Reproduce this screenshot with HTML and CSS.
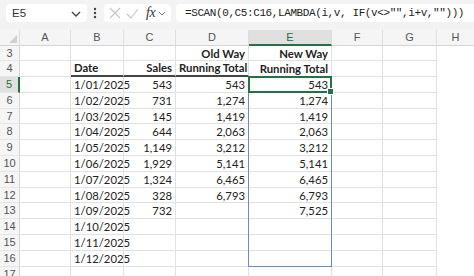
FILE: index.html
```html
<!DOCTYPE html>
<html lang="en">
<head>
  <meta charset="UTF-8">
  <title>SCAN running total</title>
  <link rel="stylesheet" href="styles.css">
</head>
<body>
  <!-- Formula bar: name box, buttons and formula text -->
  <div class="formula-bar">
    <div class="name-box">
      <span>E5</span>
      <svg class="chev" width="10" height="6" viewBox="0 0 10 6"><path d="M1 1l4 4 4-4" fill="none" stroke="#444" stroke-width="1.3"/></svg>
    </div>
    <svg class="dots" width="4" height="12" viewBox="0 0 4 12"><circle cx="2" cy="2" r="1.2"/><circle cx="2" cy="6" r="1.2"/><circle cx="2" cy="10" r="1.2"/></svg>
    <div class="fx-box">
      <svg width="12" height="12" viewBox="0 0 12 12"><path d="M1 1l10 10M11 1L1 11" stroke="#c4c4c4" stroke-width="1.1"/></svg>
      <svg width="13" height="11" viewBox="0 0 13 11"><path d="M1 6l4 4 7-9" fill="none" stroke="#c4c4c4" stroke-width="1.1"/></svg>
      <span class="fx">fx</span>
      <svg class="chev-sm" width="8" height="5" viewBox="0 0 8 5"><path d="M1 1l3 3 3-3" fill="none" stroke="#777" stroke-width="1"/></svg>
    </div>
    <div class="formula-input">=SCAN(0,C5:C16,LAMBDA(i,v, IF(v&lt;&gt;"",i+v,"")))</div>
  </div>

  <!-- Worksheet grid -->
  <div class="sheet">
    <!-- column headers -->
    <div class="corner"><span class="tri"></span></div>
    <div class="ch">A</div><div class="ch">B</div><div class="ch">C</div><div class="ch">D</div>
    <div class="ch active">E</div><div class="ch">F</div><div class="ch">G</div><div class="ch last">H</div>

    <!-- row 3 -->
    <div class="rh">3</div>
    <div class="c"></div><div class="c"></div><div class="c"></div>
    <div class="c n b">Old Way</div><div class="c n b">New Way</div>
    <div class="c"></div><div class="c"></div><div class="h"></div>

    <!-- row 4 -->
    <div class="rh">4</div>
    <div class="c"></div><div class="c b tb">Date</div><div class="c n b tb">Sales</div>
    <div class="c n b tb">Running Total</div><div class="c n b">Running Total</div>
    <div class="c"></div><div class="c"></div><div class="h"></div>

    <!-- row 5 -->
    <div class="rh active">5</div>
    <div class="c"></div><div class="c">1/01/2025</div><div class="c n">543</div>
    <div class="c n">543</div><div class="c n">543</div>
    <div class="c"></div><div class="c"></div><div class="h"></div>

    <!-- row 6 -->
    <div class="rh">6</div>
    <div class="c"></div><div class="c">1/02/2025</div><div class="c n">731</div>
    <div class="c n">1,274</div><div class="c n">1,274</div>
    <div class="c"></div><div class="c"></div><div class="h"></div>

    <!-- row 7 -->
    <div class="rh">7</div>
    <div class="c"></div><div class="c">1/03/2025</div><div class="c n">145</div>
    <div class="c n">1,419</div><div class="c n">1,419</div>
    <div class="c"></div><div class="c"></div><div class="h"></div>

    <!-- row 8 -->
    <div class="rh">8</div>
    <div class="c"></div><div class="c">1/04/2025</div><div class="c n">644</div>
    <div class="c n">2,063</div><div class="c n">2,063</div>
    <div class="c"></div><div class="c"></div><div class="h"></div>

    <!-- row 9 -->
    <div class="rh">9</div>
    <div class="c"></div><div class="c">1/05/2025</div><div class="c n">1,149</div>
    <div class="c n">3,212</div><div class="c n">3,212</div>
    <div class="c"></div><div class="c"></div><div class="h"></div>

    <!-- row 10 -->
    <div class="rh">10</div>
    <div class="c"></div><div class="c">1/06/2025</div><div class="c n">1,929</div>
    <div class="c n">5,141</div><div class="c n">5,141</div>
    <div class="c"></div><div class="c"></div><div class="h"></div>

    <!-- row 11 -->
    <div class="rh">11</div>
    <div class="c"></div><div class="c">1/07/2025</div><div class="c n">1,324</div>
    <div class="c n">6,465</div><div class="c n">6,465</div>
    <div class="c"></div><div class="c"></div><div class="h"></div>

    <!-- row 12 -->
    <div class="rh">12</div>
    <div class="c"></div><div class="c">1/08/2025</div><div class="c n">328</div>
    <div class="c n">6,793</div><div class="c n">6,793</div>
    <div class="c"></div><div class="c"></div><div class="h"></div>

    <!-- row 13 -->
    <div class="rh">13</div>
    <div class="c"></div><div class="c">1/09/2025</div><div class="c n">732</div>
    <div class="c"></div><div class="c n">7,525</div>
    <div class="c"></div><div class="c"></div><div class="h"></div>

    <!-- row 14 -->
    <div class="rh">14</div>
    <div class="c"></div><div class="c">1/10/2025</div><div class="c"></div>
    <div class="c"></div><div class="c"></div>
    <div class="c"></div><div class="c"></div><div class="h"></div>

    <!-- row 15 -->
    <div class="rh">15</div>
    <div class="c"></div><div class="c">1/11/2025</div><div class="c"></div>
    <div class="c"></div><div class="c"></div>
    <div class="c"></div><div class="c"></div><div class="h"></div>

    <!-- row 16 -->
    <div class="rh">16</div>
    <div class="c"></div><div class="c">1/12/2025</div><div class="c"></div>
    <div class="c"></div><div class="c"></div>
    <div class="c"></div><div class="c"></div><div class="h"></div>

    <!-- row 17 (cut off) -->
    <div class="rh">17</div>
    <div class="c"></div><div class="c"></div><div class="c"></div>
    <div class="c"></div><div class="c"></div>
    <div class="c"></div><div class="c"></div><div class="h"></div>

    <!-- spill range and active cell, drawn over the grid -->
    <div class="spill"></div>
    <div class="active-cell"><span class="handle"></span></div>
  </div>
</body>
</html>
```

FILE: styles.css
```css
/* Page basics */
body {
  margin: 0;
  font-family: 'Lato', 'Liberation Sans', sans-serif;
  background-color: #ffffff;
  color: #222;
  overflow: hidden;
}

/* Formula bar strip */
.formula-bar {
  height: 30px;
  background-color: #f3f3f3;
  display: flex;
  align-items: flex-start;
  padding: 4px 0 0 6px;
  box-sizing: border-box;
}

.name-box {
  width: 81px;
  height: 18px;
  background: #fff;
  border-radius: 4px;
  display: flex;
  align-items: center;
  justify-content: space-between;
  padding: 0 6px 0 6px;
  box-sizing: border-box;
  font-family: 'Liberation Sans', sans-serif;
  font-size: 11.5px;
  color: #333;
}

.name-box .chev {
  margin-top: 1px;
}

.dots {
  fill: #444;
  margin: 3px 7px 0 6px;
}

.fx-box {
  width: 67px;
  height: 18px;
  background: #fff;
  border-radius: 4px;
  display: flex;
  align-items: center;
  gap: 5px;
  padding-left: 5px;
  box-sizing: border-box;
}

.fx-box .fx {
  font-family: 'Liberation Serif', serif;
  font-style: italic;
  font-size: 14px;
  color: #333;
  margin-left: 2px;
  letter-spacing: -0.5px;
}

.fx-box .chev-sm {
  margin-left: -2px;
}

.formula-input {
  flex: 1;
  height: 18px;
  margin-left: 5px;
  background: #fff;
  border-radius: 4px 0 0 4px;
  padding-left: 9px;
  font-family: 'Liberation Mono', monospace;
  font-size: 11px;
  letter-spacing: -0.4px;
  line-height: 18px;
  color: #222;
  white-space: nowrap;
}

/* Worksheet grid */
.sheet {
  position: relative;
  display: grid;
  grid-template-columns: 20px 51px 53px 52px 73px 83px 51px 54px 1fr;
  grid-template-rows: 15.5px repeat(15, 15.8px);
  font-size: 11.3px;
}

.sheet > div {
  box-sizing: border-box;
  white-space: nowrap;
}

/* column header cells */
.corner,
.ch {
  background: #f5f5f5;
  border-right: 1px solid #dedede;
  border-bottom: 1px solid #d4d4d4;
  text-align: center;
  line-height: 15px;
  color: #555;
  font-family: 'Liberation Sans', sans-serif;
  font-size: 11px;
}

.ch.last {
  border-right: none;
}

.ch.active {
  background: #e0e0e0;
  color: #217346;
  border-bottom: 2px solid #217346;
}

.corner {
  position: relative;
}

.corner .tri {
  position: absolute;
  right: 2px;
  bottom: 2px;
  width: 0;
  height: 0;
  border-left: 8px solid transparent;
  border-bottom: 8px solid #d0d0d0;
}

/* row header cells */
.rh {
  background: #f5f5f5;
  border-right: 1px solid #d4d4d4;
  border-bottom: 1px solid #e6e6e6;
  text-align: center;
  line-height: 15.8px;
  color: #555;
  font-family: 'Liberation Sans', sans-serif;
  font-size: 11px;
}

.rh.active {
  background: #e0e0e0;
  color: #217346;
  border-right: 2px solid #217346;
}

/* ordinary cells */
.c {
  border-right: 1px solid #e1e1e1;
  border-bottom: 1px solid #e1e1e1;
  padding: 0 3px;
  line-height: 15.8px;
  overflow: visible;
}

.c.n {
  text-align: right;
}

.c.b {
  font-weight: bold;
}

/* heavy rule under the headings */
.c.tb {
  border-bottom: 2px solid #444;
  line-height: 14.8px;
}

/* column H is left blank */
.h {
  background: #fff;
}

/* blue spill border round E5:E16 */
.spill {
  position: absolute;
  grid-column: 6 / 7;
  grid-row: 4 / 16;
  inset: 0 0 0 -1px;
  border: 1px solid #6a86d4;
  pointer-events: none;
}

/* green active cell E5 */
.active-cell {
  position: absolute;
  grid-column: 6 / 7;
  grid-row: 4 / 5;
  inset: -1px 0 0 -1px;
  border: 2px solid #217346;
  pointer-events: none;
}

.active-cell .handle {
  position: absolute;
  right: -4px;
  bottom: -4px;
  width: 5px;
  height: 5px;
  background: #217346;
  border: 1px solid #fff;
}
```
